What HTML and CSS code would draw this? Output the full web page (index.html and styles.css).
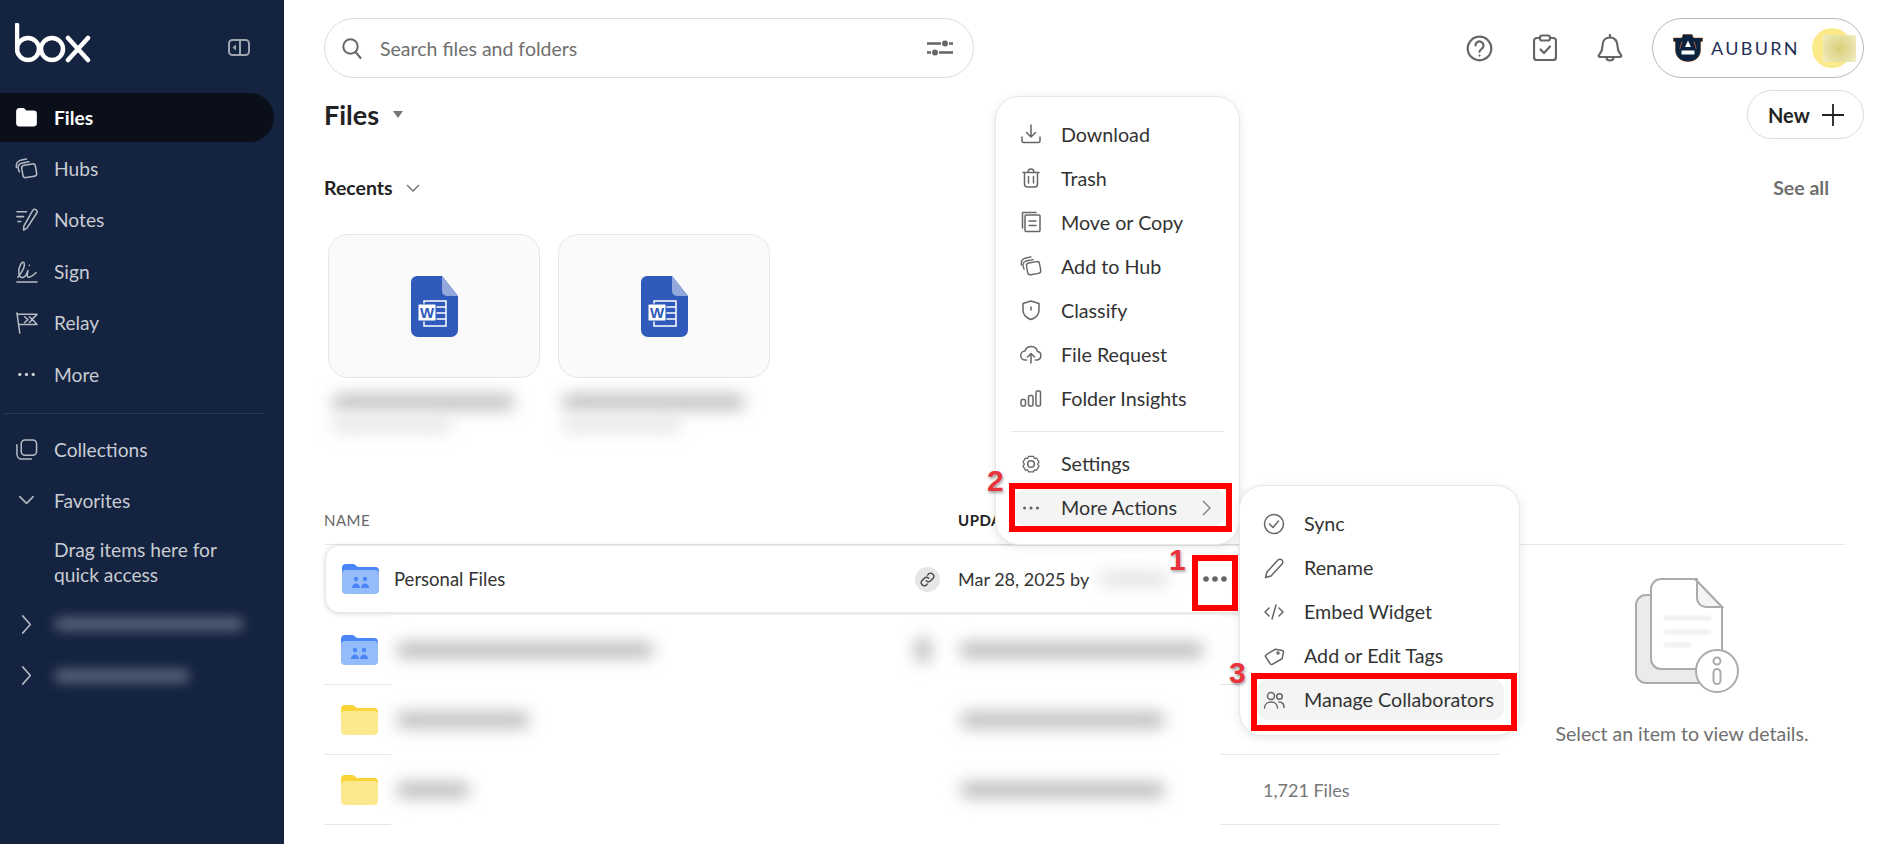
FILE: index.html
```html
<!DOCTYPE html>
<html lang="en">
<head>
    <meta charset="UTF-8">
    <meta name="viewport" content="width=device-width, initial-scale=1.0">
    <title>Files | Box</title>
    <link rel="stylesheet" href="styles.css">
</head>
<body>
    <svg class="defs" width="0" height="0">
        <symbol id="hub" viewBox="0 0 24 24">
            <rect x="7.500" y="8" width="14.500" height="13" rx="3" transform="rotate(-10 14 14)"/>
            <path d="M4.500 15.500C2.500 11 3 8 6.500 6.500l8-1.500M1.500 11C1 7 2.500 4.500 5.500 3.500l6.500-1.500"/>
        </symbol>
        <symbol id="dots" viewBox="0 0 24 24">
            <circle cx="5" cy="12" r="1.700"/><circle cx="12" cy="12" r="1.700"/><circle cx="19" cy="12" r="1.700"/>
        </symbol>
        <symbol id="folder-blue" viewBox="0 0 37 30">
            <path d="M0 4a4 4 0 0 1 4-4H12l4 3H33a4 4 0 0 1 4 4V14H0z" fill="#4a86f7"/>
            <rect y="6" width="37" height="24" rx="4" fill="#94bcfb"/>
            <circle cx="14" cy="15" r="2.200" fill="#4a86f7"/><circle cx="23" cy="15" r="2.200" fill="#4a86f7"/>
            <path d="M10 24c0-6 8-6 8 0zM19 24c0-6 8-6 8 0z" fill="#4a86f7"/>
        </symbol>
        <symbol id="folder-yellow" viewBox="0 0 37 30">
            <path d="M0 4a4 4 0 0 1 4-4H12l4 3H33a4 4 0 0 1 4 4V14H0z" fill="#fbd437"/>
            <rect y="6" width="37" height="24" rx="4" fill="#fce88f"/>
        </symbol>
    </svg>

    <div class="app">
        <aside class="sidebar">
            <div class="brand">
                <svg class="logo" width="76" height="40" viewBox="0 0 76 40">
                    <path d="M2 2V26"/>
                    <circle cx="13" cy="26" r="11"/>
                    <circle cx="37" cy="26" r="11"/>
                    <path d="M53 15L73 37M73 15L53 37"/>
                </svg>
                <svg class="collapse" width="22" height="17" viewBox="0 0 22 17">
                    <rect x="1" y="1" width="20" height="15" rx="3.500"/>
                    <path d="M12 1V16"/>
                    <path class="solid" d="M8 5.500L4.500 8.500L8 11.500z"/>
                </svg>
            </div>

            <nav class="nav">
                <a class="nav-item active">
                    <span class="nav-pill">
                        <svg class="nav-icon" viewBox="0 0 24 24"><path class="solid" d="M2 5.500A2.500 2.500 0 0 1 4.500 3H9l2.500 2.500h8A2.500 2.500 0 0 1 22 8v10a2.500 2.500 0 0 1-2.500 2.500h-15A2.500 2.500 0 0 1 2 18z"/></svg>
                        Files
                    </span>
                </a>
                <a class="nav-item"><svg class="nav-icon"><use href="#hub"/></svg>Hubs</a>
                <a class="nav-item">
                    <svg class="nav-icon" viewBox="0 0 24 24"><path d="M2 4H12M2 9H9M3 14H6M18.500 2.500a2.500 2.500 0 0 1 4 3L12.500 21l-3.500 2 .2-4z"/></svg>
                    Notes
                </a>
                <a class="nav-item">
                    <svg class="nav-icon" viewBox="0 0 24 24"><path d="M2 23H23M3 18C7 13 11 6 9.500 3 7.500 0 3 8 4 14c.5 4 3 5 5 4 2-1 3.500-4 4.500-7-.5 3-1.500 7 .5 7 3 0 6-3 8-5M15 5.500v.1"/></svg>
                    Sign
                </a>
                <a class="nav-item">
                    <svg class="nav-icon" viewBox="0 0 24 24"><path d="M2 2L5 23M2.500 3.500H23L18 8.500l5 5.500H4.500M10 6l3.500 3L10 12M15 6l3 3-3 3"/></svg>
                    Relay
                </a>
                <a class="nav-item"><svg class="nav-icon dots-icon"><use href="#dots"/></svg>More</a>
            </nav>

            <div class="nav-divider"></div>

            <nav class="nav">
                <a class="nav-item">
                    <svg class="nav-icon" viewBox="0 0 24 24"><rect x="6.500" y="2" width="16" height="16" rx="4"/><path d="M2 7V17a5 5 0 0 0 5 5H17"/></svg>
                    Collections
                </a>
                <a class="nav-item">
                    <svg class="nav-icon" viewBox="0 0 24 24"><path d="M5 8L12 15L19 8"/></svg>
                    Favorites
                </a>
                <p class="nav-hint">Drag items here for quick access</p>
                <a class="nav-item">
                    <svg class="nav-icon" viewBox="0 0 24 24"><path d="M8 3L16 12L8 21"/></svg>
                    <span class="blur-bar side-long"></span>
                </a>
                <a class="nav-item">
                    <svg class="nav-icon" viewBox="0 0 24 24"><path d="M8 3L16 12L8 21"/></svg>
                    <span class="blur-bar side-short"></span>
                </a>
            </nav>
        </aside>

        <main class="main">
            <header class="topbar">
                <div class="search">
                    <svg class="search-icon" width="20" height="21" viewBox="0 0 20 21"><circle cx="8.500" cy="8.500" r="7.200"/><path d="M13.500 14L18.500 20"/></svg>
                    <input class="search-input" type="text" placeholder="Search files and folders">
                    <svg class="filter-icon" width="26" height="16" viewBox="0 0 26 16">
                        <path d="M0 3.500H14M22 3.500H26M0 12.500H4M12 12.500H26"/>
                        <circle cx="18" cy="3.500" r="3"/><circle cx="8" cy="12.500" r="3"/>
                    </svg>
                </div>
                <div class="top-actions">
                    <svg class="top-icon" width="27" height="27" viewBox="0 0 27 27">
                        <circle cx="13.500" cy="13.500" r="11.800"/>
                        <path d="M9.500 10.500a4 4 0 1 1 6.200 3.300c-1.500 1-2.200 1.700-2.200 3"/>
                        <path d="M13.500 20.500v.1"/>
                    </svg>
                    <svg class="top-icon" width="24" height="28" viewBox="0 0 24 28">
                        <path d="M7 4H4a3 3 0 0 0-3 3V23a3 3 0 0 0 3 3H20a3 3 0 0 0 3-3V7a3 3 0 0 0-3-3H17"/>
                        <rect x="7" y="1.500" width="10" height="5" rx="2"/>
                        <path d="M7.500 15.500L11 19L17 12.500"/>
                    </svg>
                    <svg class="top-icon bell" width="26" height="29" viewBox="0 0 26 29">
                        <path d="M13 3.500C7.500 3.500 5.500 8 5.500 12c0 5-2 7-3.500 9-.8 1 0 2 1 2H23c1 0 1.800-1 1-2-1.500-2-3.500-4-3.500-9 0-4-2-8.500-7.500-8.500zM13 1v2.500M9.500 23.500c0 4 7 4 7 0"/>
                    </svg>
                    <div class="account">
                        <svg class="au-logo" width="30" height="28" viewBox="0 0 30 28">
                            <path d="M10 .5H19L20.500 4H29.500V7.500H27.500V16C27.500 23 22 27.500 15 27.500S2.500 23 2.500 16V7.500H.5V4H9z"/>
                            <path class="au-cut" d="M15 6.500L18 13H12zM8.500 16.500H21.500V20.500H8.500z"/>
                            <path class="au-seam" d="M9 7.500L6.800 15M21 7.500L23.200 15"/>
                        </svg>
                        <span class="au-name">AUBURN</span>
                        <span class="avatar"><span class="avatar-blur"></span></span>
                    </div>
                </div>
            </header>

            <div class="title-row">
                <h1 class="page-title">Files<span class="title-caret"></span></h1>
                <button class="new-btn">New
                    <svg width="22" height="22" viewBox="0 0 22 22"><path d="M11 0V22M0 11H22"/></svg>
                </button>
            </div>

            <div class="recents-row">
                <h2 class="recents-title">Recents
                    <svg width="14" height="8" viewBox="0 0 14 8"><path d="M1 1L7 7L13 1"/></svg>
                </h2>
                <a class="see-all">See all</a>
            </div>

            <div class="recents">
                <div class="recent">
                    <div class="recent-card">
                        <svg width="47" height="61" viewBox="0 0 47 61">
                            <path d="M6 0H31L47 20V54a7 7 0 0 1-7 7H7a7 7 0 0 1-7-7V6a6 6 0 0 1 6-6z" fill="#2f5abb"/>
                            <path d="M31 0L47 20H36a5 5 0 0 1-5-5z" fill="#93a9de"/>
                            <path d="M13 25H35V50H13z" stroke="#fff" stroke-width="1.500"/>
                            <path d="M24 31H35M24 37H35M24 43H35" stroke="#fff" stroke-width="1.500"/>
                            <rect x="7" y="28" width="18" height="17" rx="1.500" fill="#fff" stroke="#2f5abb"/>
                            <text x="16" y="42" text-anchor="middle" class="word-letter">W</text>
                        </svg>
                    </div>
                    <div class="recent-label">
                        <span class="blur-bar recent-name"></span>
                        <span class="blur-bar recent-meta"></span>
                    </div>
                </div>
                <div class="recent">
                    <div class="recent-card">
                        <svg width="47" height="61" viewBox="0 0 47 61">
                            <path d="M6 0H31L47 20V54a7 7 0 0 1-7 7H7a7 7 0 0 1-7-7V6a6 6 0 0 1 6-6z" fill="#2f5abb"/>
                            <path d="M31 0L47 20H36a5 5 0 0 1-5-5z" fill="#93a9de"/>
                            <path d="M13 25H35V50H13z" stroke="#fff" stroke-width="1.500"/>
                            <path d="M24 31H35M24 37H35M24 43H35" stroke="#fff" stroke-width="1.500"/>
                            <rect x="7" y="28" width="18" height="17" rx="1.500" fill="#fff" stroke="#2f5abb"/>
                            <text x="16" y="42" text-anchor="middle" class="word-letter">W</text>
                        </svg>
                    </div>
                    <div class="recent-label">
                        <span class="blur-bar recent-name"></span>
                        <span class="blur-bar recent-meta"></span>
                    </div>
                </div>
            </div>

            <div class="list-head">
                <span class="col-name">NAME</span>
                <span class="col-updated">UPDATED</span>
            </div>

            <div class="list-body">
                <div class="rows">
                    <div class="row row-hover">
                        <svg class="folder" width="37" height="30"><use href="#folder-blue"/></svg>
                        <span class="row-name">Personal Files</span>
                        <span class="link-badge">
                            <svg width="15" height="15" viewBox="0 0 24 24"><path d="M10 14a5 5 0 0 0 7 0l4-4a5 5 0 0 0-7-7l-2 2M14 10a5 5 0 0 0-7 0l-4 4a5 5 0 0 0 7 7l2-2"/></svg>
                        </span>
                        <span class="row-date">Mar 28, 2025 by</span>
                        <span class="row-owner"><span class="blur-bar owner-bar"></span></span>
                        <svg class="row-dots" width="24" height="8" viewBox="0 0 24 8">
                            <circle cx="3" cy="4" r="2.800"/><circle cx="12" cy="4" r="2.800"/><circle cx="21" cy="4" r="2.800"/>
                        </svg>
                    </div>
                    <div class="row">
                        <svg class="folder" width="37" height="30"><use href="#folder-blue"/></svg>
                        <div class="row-patch">
                            <span class="blur-bar name-a"></span>
                            <span class="blur-bar badge-bar"></span>
                            <span class="blur-bar date-a"></span>
                        </div>
                    </div>
                    <div class="row">
                        <svg class="folder" width="37" height="30"><use href="#folder-yellow"/></svg>
                        <div class="row-patch">
                            <span class="blur-bar name-b"></span>
                            <span class="blur-bar date-b"></span>
                        </div>
                    </div>
                    <div class="row">
                        <svg class="folder" width="37" height="30"><use href="#folder-yellow"/></svg>
                        <div class="row-patch">
                            <span class="blur-bar name-c"></span>
                            <span class="blur-bar date-b"></span>
                        </div>
                        <span class="row-count">1,721 Files</span>
                    </div>
                </div>

                <aside class="details">
                    <svg class="details-icon" width="104" height="116" viewBox="0 0 104 116">
                        <rect x="1" y="17" width="76" height="88" rx="10" fill="#ebebeb"/>
                        <path d="M26 1H60L87 29V81a10 10 0 0 1-10 10H26a10 10 0 0 1-10-10V11A10 10 0 0 1 26 1z" fill="#fff"/>
                        <path d="M60 1L87 29H71a9 9 0 0 1-9-9V1z" fill="#f4f4f4"/>
                        <path class="doc-line" d="M31 40H74M31 54H74M31 67H54"/>
                        <circle cx="82" cy="93" r="21" fill="#fff"/>
                        <circle cx="82" cy="83" r="3.500" fill="#fff"/>
                        <rect x="78.500" y="91" width="7" height="15" rx="3.500" fill="#fff"/>
                    </svg>
                    <p class="details-text">Select an item to view details.</p>
                </aside>
            </div>
        </main>

        <div class="menu menu-main">
            <a class="menu-item">
                <svg class="menu-icon" viewBox="0 0 22 22"><path d="M11 2V14M6.500 9.500L11 14L15.500 9.500M2 14V18a1.500 1.500 0 0 0 1.500 1.500h15A1.500 1.500 0 0 0 20 18V14"/></svg>
                Download
            </a>
            <a class="menu-item">
                <svg class="menu-icon" viewBox="0 0 22 22"><path d="M3 5.500H19M8 5.500C8 3 9 2 11 2s3 1 3 3.500M4.500 5.500V17a3 3 0 0 0 3 3h7a3 3 0 0 0 3-3V5.500M8.500 9.500V16M13.500 9.500V16"/></svg>
                Trash
            </a>
            <a class="menu-item">
                <svg class="menu-icon" viewBox="0 0 22 22"><rect x="5" y="4" width="15" height="16.500" rx="1"/><path d="M2.500 17V1.500H16M9 10H16M9 14.500H16"/></svg>
                Move or Copy
            </a>
            <a class="menu-item"><svg class="menu-icon"><use href="#hub"/></svg>Add to Hub</a>
            <a class="menu-item">
                <svg class="menu-icon" viewBox="0 0 22 22"><path d="M11 2L19 4.500V11c0 5-3.500 8-8 9.500C6.500 19 3 16 3 11V4.500zM11 8V11"/></svg>
                Classify
            </a>
            <a class="menu-item">
                <svg class="menu-icon" viewBox="0 0 22 22"><path d="M6.500 17H5.500a4.500 4.500 0 0 1-.5-9A6.500 6.500 0 0 1 17.500 8.500a4.300 4.300 0 0 1-1 8.500H15.500M11 20V10.500M7.500 14L11 10.500L14.500 14"/></svg>
                File Request
            </a>
            <a class="menu-item">
                <svg class="menu-icon" viewBox="0 0 22 22"><rect x="1" y="12.500" width="4.500" height="6.500" rx="1.500"/><rect x="8.500" y="8.500" width="4.500" height="10.500" rx="1.500"/><rect x="16" y="4" width="4.500" height="15" rx="1.500"/></svg>
                Folder Insights
            </a>
            <div class="menu-divider"></div>
            <a class="menu-item">
                <svg class="menu-icon" viewBox="0 0 22 22"><path d="M8 2.500h6l1 2.500 2.800-.3 3 4.800-1.800 2.500 1.800 2.500-3 4.800-2.800-.3-1 2.500H8l-1-2.500-2.800.3-3-4.800L3 12 1.200 9.500l3-4.800L7 5z" transform="translate(2 1.300) scale(.82)"/><circle cx="11" cy="11" r="3.300"/></svg>
                Settings
            </a>
            <a class="menu-item selected">
                <svg class="menu-icon dots-icon"><use href="#dots"/></svg>
                More Actions
                <svg class="menu-arrow" width="9" height="16" viewBox="0 0 9 16"><path d="M1 1L8 8L1 15"/></svg>
            </a>
        </div>

        <div class="menu menu-sub">
            <a class="menu-item">
                <svg class="menu-icon" viewBox="0 0 22 22"><circle cx="11" cy="11" r="9.500"/><path d="M6.500 11L10 14.500L15.500 8"/></svg>
                Sync
            </a>
            <a class="menu-item">
                <svg class="menu-icon" viewBox="0 0 22 22"><path d="M15 3a2.800 2.800 0 0 1 4 4L8 19l-5.500 1.500L4 15z"/></svg>
                Rename
            </a>
            <a class="menu-item">
                <svg class="menu-icon" viewBox="0 0 22 22"><path d="M6 7L2 11L6 15M16 7L20 11L16 15M13 4L9 18"/></svg>
                Embed Widget
            </a>
            <a class="menu-item">
                <svg class="menu-icon" viewBox="0 0 22 22"><path d="M11 4H18a1.500 1.500 0 0 1 1.500 1.500V12L11 19.500a1.500 1.500 0 0 1-2 0L3 13.500a1.500 1.500 0 0 1 0-2z" transform="rotate(12 11 11)"/><circle cx="15" cy="8" r="1"/></svg>
                Add or Edit Tags
            </a>
            <a class="menu-item selected tall">
                <svg class="menu-icon" viewBox="0 0 22 22"><circle cx="8" cy="7" r="3.500"/><circle cx="16.500" cy="7.500" r="2.800"/><path d="M1.500 19c0-8 13-8 13 0M16 13c3 0 5 2 5 5.500"/></svg>
                Manage Collaborators
            </a>
        </div>

        <span class="callout box-dots"></span>
        <span class="callout box-more"></span>
        <span class="callout box-manage"></span>
        <span class="step step-1">1</span>
        <span class="step step-2">2</span>
        <span class="step step-3">3</span>
    </div>
</body>
</html>
```

FILE: styles.css
```css
* {
    margin: 0;
    padding: 0;
    box-sizing: border-box;
}

body {
    font-family: Lato, "Noto Sans", sans-serif;
    font-size: 19.500px;
    color: #2b2b2b;
    background: #fff;
    overflow: hidden;
}

.defs {
    position: absolute;
}

svg {
    fill: none;
    stroke: none;
    flex-shrink: 0;
}

.word-letter {
    font-family: "Liberation Sans", sans-serif;
    font-weight: 700;
    font-size: 15px;
    fill: #2f5abb;
}

.app {
    position: relative;
    display: flex;
    height: 100vh;
    overflow: hidden;
}

/* Sidebar */
.sidebar {
    width: 284px;
    flex-shrink: 0;
    background: #14233f;
    color: #c8ccd3;
    font-size: 19.200px;
    overflow: hidden;
}

.brand {
    height: 91.5px;
    display: flex;
    align-items: flex-start;
    justify-content: space-between;
    padding: 23px 34px 0 15px;
}

.logo {
    stroke: #fff;
    stroke-width: 4.500px;
    stroke-linecap: round;
}

.collapse {
    margin-top: 16px;
    stroke: #9ea4ae;
    stroke-width: 2px;
}

.collapse .solid {
    fill: #9ea4ae;
    stroke: none;
}

.nav {
    display: flex;
    flex-direction: column;
}

.nav-item {
    height: 51.4px;
    display: flex;
    align-items: center;
    padding-left: 15px;
    gap: 16px;
    color: #c8ccd3;
}

.nav-icon {
    width: 23px;
    height: 23px;
    stroke: #b5bac3;
    stroke-width: 1.600px;
    stroke-linecap: round;
    stroke-linejoin: round;
}

.dots-icon {
    fill: currentColor;
    stroke: none;
}

.nav-item.active {
    padding-left: 0;
    color: #fff;
    font-weight: 700;
}

.nav-pill {
    width: 274px;
    height: 49px;
    display: flex;
    align-items: center;
    gap: 16px;
    padding-left: 15px;
    background: #0a0f19;
    border-radius: 0 25px 25px 0;
}

.nav-pill .solid {
    fill: #fff;
    stroke: #fff;
}

.nav-divider {
    height: 1px;
    margin: 13px 20px 10px 4px;
    background: #2a3854;
}

.nav-hint {
    width: 250px;
    padding: 10px 0 12px 54px;
    line-height: 25px;
}

/* Blurred, unreadable text */
.blur-bar {
    display: block;
    height: 16px;
    background: #bcbcbc;
    border-radius: 8px;
    filter: blur(8px);
}

.side-long {
    width: 190px;
    height: 14px;
    background: #566079;
    filter: blur(6px);
}

.side-short {
    width: 136px;
    height: 14px;
    background: #566079;
    filter: blur(6px);
}

/* Main column */
.main {
    flex: 1;
    min-width: 0;
    padding: 18px 14px 0 40px;
}

.topbar {
    display: flex;
    justify-content: space-between;
    align-items: center;
}

.search {
    width: 650px;
    height: 60px;
    display: flex;
    align-items: center;
    padding: 0 20px 0 17px;
    border: 1px solid #dcdcdc;
    border-radius: 30px;
}

.search-icon {
    stroke: #666;
    stroke-width: 2px;
    stroke-linecap: round;
}

.search-input {
    flex: 1;
    margin-left: 18px;
    border: 0;
    outline: 0;
    font: inherit;
    color: #333;
}

.search-input::placeholder {
    color: #707070;
    opacity: 1;
}

.filter-icon {
    fill: #666;
    stroke: #666;
    stroke-width: 2.500px;
}

.filter-icon circle {
    stroke: none;
}

.top-actions {
    display: flex;
    align-items: center;
}

.top-icon {
    margin-right: 40px;
    stroke: #666;
    stroke-width: 2.200px;
    stroke-linecap: round;
    stroke-linejoin: round;
}

.top-icon.bell {
    margin-right: 29px;
}

.account {
    width: 212px;
    height: 60px;
    display: flex;
    align-items: center;
    padding-left: 20px;
    border: 1px solid #b9b9b9;
    border-radius: 30px;
}

.au-logo {
    fill: #0c2340;
    stroke: #e87722;
    stroke-width: .8px;
    paint-order: stroke;
}

.au-logo .au-cut {
    fill: #fff;
    stroke: none;
}

.au-logo .au-seam {
    fill: none;
    stroke: #e87722;
    stroke-width: .7px;
}

.au-name {
    margin-left: 8px;
    font-size: 18px;
    letter-spacing: 2.300px;
    color: #1f2f55;
}

.avatar {
    width: 40px;
    height: 40px;
    margin-left: auto;
    margin-right: 11px;
    display: flex;
    justify-content: flex-end;
    align-items: center;
    background: #fbe98a;
    border-radius: 50%;
}

.avatar-blur {
    width: 33px;
    height: 27px;
    margin-right: -4px;
    background: radial-gradient(circle, #d8cf78 0, #e9e3ab 70%, #f2efca 100%);
}

.title-row {
    display: flex;
    justify-content: space-between;
    align-items: center;
    margin-top: 12px;
}

.page-title {
    display: flex;
    align-items: center;
    font-size: 27px;
    font-weight: 700;
    color: #222;
}

.title-caret {
    margin-left: 14px;
    border: 5px solid transparent;
    border-top: 7px solid #777;
    border-bottom: 0;
}

.new-btn {
    width: 117px;
    height: 49px;
    display: flex;
    align-items: center;
    gap: 12px;
    padding-left: 20px;
    background: #fff;
    border: 1px solid #dcdcdc;
    border-radius: 25px;
    font: 700 20px Lato, sans-serif;
    color: #222;
}

.new-btn svg {
    stroke: #222;
    stroke-width: 1.800px;
}

.recents-row {
    width: 1505px;
    display: flex;
    justify-content: space-between;
    align-items: center;
    margin-top: 37px;
}

.recents-title {
    display: flex;
    align-items: center;
    gap: 13px;
    font-size: 19.500px;
    font-weight: 700;
    color: #222;
}

.recents-title svg {
    stroke: #777;
    stroke-width: 1.500px;
}

.see-all {
    font-weight: 700;
    color: #6f6f6f;
}

.recents {
    display: flex;
    gap: 18px;
    margin: 35px 0 0 4px;
}

.recent {
    width: 212px;
}

.recent-card {
    height: 144px;
    display: flex;
    align-items: center;
    justify-content: center;
    background: #fafafa;
    border: 1px solid #e6e6e6;
    border-radius: 20px;
}

.recent-label {
    height: 51px;
    margin: 9px 0 0 4px;
    padding-top: 7px;
}

.recent-name {
    width: 183px;
    background: #c0c0c0;
}

.recent-meta {
    width: 120px;
    height: 14px;
    margin-top: 8px;
    background: #e4e4e4;
}

/* File list */
.list-head {
    width: 1521px;
    height: 36px;
    margin-top: 71px;
    display: flex;
    align-items: flex-start;
    border-bottom: 1px solid #e6e6e6;
    font-size: 15px;
    letter-spacing: .5px;
}

.col-name {
    width: 634px;
    padding-top: 2px;
    color: #666;
}

.col-updated {
    padding-top: 2px;
    font-weight: 700;
    color: #222;
}

.list-body {
    display: flex;
}

.rows {
    width: 1176px;
    flex-shrink: 0;
}

.row {
    position: relative;
    height: 70px;
    display: flex;
    align-items: center;
    padding-left: 17px;
    border-bottom: 1px solid #e6e6e6;
    font-size: 18px;
}

.row-hover {
    height: 68px;
    margin-left: 1px;
    padding-left: 16px;
    margin-bottom: 2px;
    background: #fff;
    border: 1px solid #e8e8e8;
    border-radius: 14px;
    box-shadow: 0 1px 5px rgba(0, 0, 0, .14);
}

.row-name {
    width: 521px;
    margin-left: 15px;
    font-size: 18.500px;
    color: #333;
}

.link-badge {
    width: 25px;
    height: 25px;
    display: flex;
    align-items: center;
    justify-content: center;
    background: #e6e6e6;
    border-radius: 50%;
}

.link-badge svg {
    stroke: #444;
    stroke-width: 2.200px;
    stroke-linecap: round;
}

.row-date {
    margin-left: 18px;
    color: #333;
}

.row-owner {
    width: 90px;
    display: block;
}

.owner-bar {
    width: 70px;
    margin-left: 10px;
    background: #e4e4e4;
}

.row-dots {
    margin-left: 24px;
    fill: #666;
}

.row-patch {
    width: 829px;
    align-self: stretch;
    margin: 0 0 -1px 13px;
    display: flex;
    align-items: center;
    padding-left: 5px;
    background: #fff;
}

.name-a {
    width: 258px;
}

.badge-bar {
    width: 16px;
    height: 26px;
    margin-left: 261px;
}

.date-a {
    width: 245px;
    margin-left: 28px;
}

.name-b {
    width: 134px;
    margin-right: 430px;
}

.name-c {
    width: 74px;
    margin-right: 490px;
}

.date-b {
    width: 205px;
}

.row-count {
    margin-left: 43px;
    color: #777;
}

.details {
    flex: 1;
    padding-top: 33px;
    text-align: center;
}

.details-icon {
    margin-left: 10px;
    stroke: #ababab;
    stroke-width: 2px;
}

.details-icon .doc-line {
    stroke: #f2f2f2;
    stroke-width: 5px;
    stroke-linecap: round;
}

.details-text {
    margin-top: 24px;
    color: #707070;
}

/* Context menus */
.menu {
    position: absolute;
    background: #fff;
    border: 1px solid #e8e8e8;
    border-radius: 24px;
    box-shadow: 0 2px 10px rgba(0, 0, 0, .1);
    padding-top: 18.500px;
    font-size: 19.700px;
}

.menu-main {
    left: 995px;
    top: 96px;
    width: 245px;
    height: 449px;
    padding-left: 18px;
    padding-right: 14px;
}

.menu-sub {
    left: 1239px;
    top: 485px;
    width: 281px;
    height: 251px;
    padding-top: 19px;
    padding-left: 17px;
    padding-right: 15px;
}

.menu-item {
    height: 37px;
    margin-bottom: 7px;
    display: flex;
    align-items: center;
    gap: 19px;
    padding-left: 6px;
    color: #333;
    border-radius: 12px;
}

.menu-icon {
    width: 22px;
    height: 22px;
    color: #666;
    stroke: #666;
    stroke-width: 1.500px;
    stroke-linecap: round;
    stroke-linejoin: round;
}

.menu-icon.dots-icon {
    stroke: none;
    fill: #666;
}

.menu-item.selected {
    background: #f4f4f4;
}

.menu-item.tall {
    height: 41px;
    margin-top: -2px;
}

.menu-arrow {
    margin-left: auto;
    margin-right: 14px;
    stroke: #888;
    stroke-width: 1.500px;
}

.menu-divider {
    height: 1px;
    margin: 14px 1px 13.500px -3px;
    background: #e6e6e6;
}

/* Tutorial annotations drawn over the screenshot */
.callout {
    position: absolute;
    border: 6px solid #f00;
}

.box-dots {
    left: 1192px;
    top: 555px;
    width: 46px;
    height: 56px;
}

.box-more {
    left: 1009px;
    top: 483px;
    width: 223px;
    height: 49px;
}

.box-manage {
    left: 1251px;
    top: 673px;
    width: 266px;
    height: 58px;
}

.step {
    position: absolute;
    font: 700 30px "Liberation Sans", sans-serif;
    color: #e8323c;
    text-shadow: 1px 2px 3px rgba(0, 0, 0, .35);
}

.step-1 {
    left: 1169px;
    top: 543px;
}

.step-2 {
    left: 987px;
    top: 464px;
}

.step-3 {
    left: 1229px;
    top: 656px;
}
```
